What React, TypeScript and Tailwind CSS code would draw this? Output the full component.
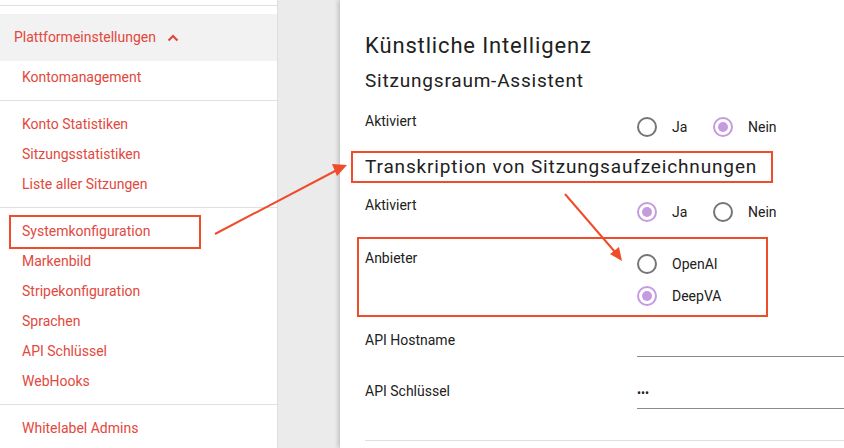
import React from 'react';

const navRed = 'text-[#e2483d]';

const Radio = ({ checked }: { checked?: boolean }) => (
  <span
    className={`flex h-[20px] w-[20px] items-center justify-center rounded-full border-2 ${
      checked ? 'border-[#c59ade]' : 'border-[#757575]'
    }`}
  >
    {checked && <span className="h-[10px] w-[10px] rounded-full bg-[#c59ade]" />}
  </span>
);

const Option = ({ label, checked, wide }: { label: string; checked?: boolean; wide?: boolean }) => (
  <div className={`flex items-center gap-[15px] ${wide ? 'w-[76px]' : ''}`}>
    <Radio checked={checked} />
    <span className="text-[14px] leading-[20px] text-[#212121]">{label}</span>
  </div>
);

const NavItem = ({ label, boxed }: { label: string; boxed?: boolean }) => (
  <div className={`relative flex h-[30px] items-center pl-[22px] text-[14px] ${navRed}`}>
    {label}
    {boxed && (
      <span className="absolute left-[9px] top-[-1px] h-[34px] w-[192px] border-2 border-[#ee4c2b]" />
    )}
  </div>
);

const Sidebar = () => (
  <aside className="h-full w-[278px] shrink-0 border-r border-[#dedede] bg-white">
    <div className="h-[6px] border-b border-[#e0e0e0]" />
    <div className="h-[8px]" />
    <div className={`flex h-[47px] items-center gap-[11px] bg-[#f2f2f2] pl-[14px] text-[14px] ${navRed}`}>
      <span>Plattformeinstellungen</span>
      <svg width="12" height="8" viewBox="0 0 12 8" fill="none">
        <path d="M1.5 6.5 L6 2 L10.5 6.5" stroke="#e2483d" strokeWidth="2.2" />
      </svg>
    </div>
    <div className="pt-[1px] pb-[8px]">
      <NavItem label="Kontomanagement" />
    </div>
    <div className="border-t border-[#e0e0e0] pt-[8px] pb-[8px]">
      <NavItem label="Konto Statistiken" />
      <NavItem label="Sitzungsstatistiken" />
      <NavItem label="Liste aller Sitzungen" />
    </div>
    <div className="border-t border-[#e0e0e0] pt-[8px] pb-[8px]">
      <NavItem label="Systemkonfiguration" boxed />
      <NavItem label="Markenbild" />
      <NavItem label="Stripekonfiguration" />
      <NavItem label="Sprachen" />
      <NavItem label="API Schlüssel" />
      <NavItem label="WebHooks" />
    </div>
    <div className="border-t border-[#e0e0e0] pt-[8px]">
      <NavItem label="Whitelabel Admins" />
    </div>
  </aside>
);

const Label = ({ children, pt }: { children: React.ReactNode; pt: string }) => (
  <div className={`w-[272px] shrink-0 text-[14px] leading-[20px] text-[#212121] ${pt}`}>{children}</div>
);

const Settings = () => (
  <main className="relative h-full min-w-[540px] flex-1 bg-white pl-[25px] pt-[32px] text-[#212121] shadow-[-2px_0_4px_rgba(0,0,0,0.18)]">
    <h1 className="text-[22px] leading-[28px] tracking-[0.85px]">Künstliche Intelligenz</h1>
    <h2 className="mt-[7px] text-[19px] leading-[28px] tracking-[0.8px]">Sitzungsraum-Assistent</h2>

    <div className="mt-[16px] flex">
      <Label pt="">Aktiviert</Label>
      <div className="flex pt-[6px]">
        <Option label="Ja" wide />
        <Option label="Nein" checked />
      </div>
    </div>

    <div className="relative mt-[16px]">
      <h2 className="text-[19px] leading-[28px] tracking-[0.85px]">Transkription von Sitzungsaufzeichnungen</h2>
      <span className="absolute left-[-14px] top-[-2px] h-[32px] w-[422px] border-2 border-[#ee4c2b]" />
    </div>

    <div className="mt-[14px] flex">
      <Label pt="">Aktiviert</Label>
      <div className="flex pt-[7px]">
        <Option label="Ja" checked wide />
        <Option label="Nein" />
      </div>
    </div>

    <div className="relative mt-[26px] flex">
      <Label pt="">Anbieter</Label>
      <div className="flex flex-col gap-[12px] pt-[6px]">
        <Option label="OpenAI" />
        <Option label="DeepVA" checked />
      </div>
      <span className="absolute left-[-8px] top-[-11px] h-[80px] w-[411px] border-2 border-[#ee4c2b]" />
    </div>

    <div className="mt-[19px] flex">
      <Label pt="pt-[5px]">API Hostname</Label>
      <div className="h-[32px] flex-1 border-b border-[#8a8a8a]" />
    </div>

    <div className="mt-[20px] flex">
      <Label pt="pt-[4px]">API Schlüssel</Label>
      <div className="flex h-[32px] flex-1 items-center border-b border-[#8a8a8a] text-[12px] leading-[20px]">
        •••
      </div>
    </div>

    <div className="mt-[31px] border-t border-[#e0e0e0]" />
  </main>
);

export default function App() {
  return (
    <div className="relative flex h-[448px] w-[844px] overflow-hidden bg-[#ebebeb] font-['Roboto',sans-serif]">
      <Sidebar />
      <div className="w-[62px] shrink-0" />
      <Settings />
      <svg className="pointer-events-none absolute left-0 top-0" width="844" height="448">
        <line x1="215" y1="234" x2="337" y2="170" stroke="#ee4c2b" strokeWidth="2" />
        <polygon points="347,165 332,164 337,176" fill="#ee4c2b" />
        <line x1="565" y1="194" x2="615" y2="252" stroke="#ee4c2b" strokeWidth="2" />
        <polygon points="622,261 610,254 619,247" fill="#ee4c2b" />
      </svg>
    </div>
  );
}
